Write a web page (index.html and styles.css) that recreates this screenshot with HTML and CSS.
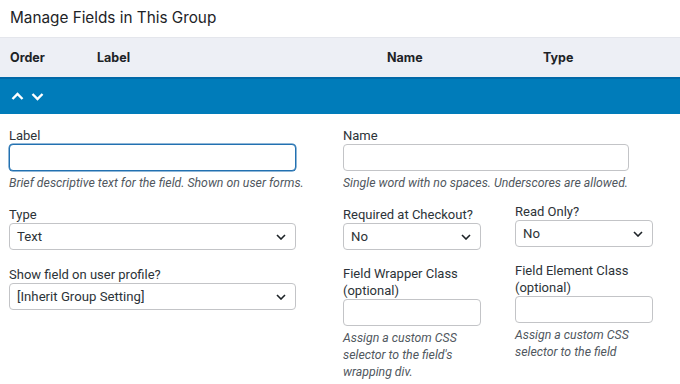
FILE: index.html
```html
<!DOCTYPE html>
<html>
<head>
<meta charset="utf-8">
<link rel="stylesheet" href="styles.css">
</head>
<body>
<div class="panel">
  <h2 class="title">Manage Fields in This Group</h2>
  <div class="thead">
    <span class="th th-order">Order</span>
    <span class="th th-label">Label</span>
    <span class="th th-name">Name</span>
    <span class="th th-type">Type</span>
  </div>
  <div class="rowbar">
    <svg class="arrow" width="13" height="9" viewBox="0 0 13 9"><path d="M1.5 7 L6.5 2 L11.5 7" fill="none" stroke="#fff" stroke-width="2.4"/></svg>
    <svg class="arrow" width="13" height="9" viewBox="0 0 13 9"><path d="M1.5 2 L6.5 7 L11.5 2" fill="none" stroke="#fff" stroke-width="2.4"/></svg>
  </div>
  <div class="form">
    <div class="col-left">
      <div class="field f-label">
        <label class="lbl">Label</label>
        <div class="input focus"></div>
        <p class="help nowrap">Brief descriptive text for the field. Shown on user forms.</p>
      </div>
      <div class="field f-type">
        <label class="lbl">Type</label>
        <div class="select"><span>Text</span><svg class="chev" width="10" height="6" viewBox="0 0 10 6"><path d="M1 1 L5 5 L9 1" fill="none" stroke="#1d2327" stroke-width="1.6"/></svg></div>
      </div>
      <div class="field f-show">
        <label class="lbl">Show field on user profile?</label>
        <div class="select"><span>[Inherit Group Setting]</span><svg class="chev" width="10" height="6" viewBox="0 0 10 6"><path d="M1 1 L5 5 L9 1" fill="none" stroke="#1d2327" stroke-width="1.6"/></svg></div>
      </div>
    </div>
    <div class="col-right">
      <div class="field f-name">
        <label class="lbl">Name</label>
        <div class="input"></div>
        <p class="help nowrap">Single word with no spaces. Underscores are allowed.</p>
      </div>
      <div class="pair pair-1">
        <div class="field sub">
          <label class="lbl">Required at Checkout?</label>
          <div class="select"><span>No</span><svg class="chev" width="10" height="6" viewBox="0 0 10 6"><path d="M1 1 L5 5 L9 1" fill="none" stroke="#1d2327" stroke-width="1.6"/></svg></div>
        </div>
        <div class="field sub raised">
          <label class="lbl">Read Only?</label>
          <div class="select"><span>No</span><svg class="chev" width="10" height="6" viewBox="0 0 10 6"><path d="M1 1 L5 5 L9 1" fill="none" stroke="#1d2327" stroke-width="1.6"/></svg></div>
        </div>
      </div>
      <div class="pair pair-2">
        <div class="field sub">
          <label class="lbl">Field Wrapper Class<br>(optional)</label>
          <div class="input"></div>
          <p class="help">Assign a custom CSS selector to the field's wrapping div.</p>
        </div>
        <div class="field sub raised">
          <label class="lbl">Field Element Class<br>(optional)</label>
          <div class="input"></div>
          <p class="help">Assign a custom CSS selector to the field</p>
        </div>
      </div>
    </div>
  </div>
</div>
</body>
</html>
```
FILE: styles.css
```css
* { box-sizing: border-box; }
html, body { margin: 0; padding: 0; background: #fff; }
body {
  font-family: Roboto, "Noto Sans", "Liberation Sans", sans-serif;
  color: #1d2327;
  width: 680px;
  height: 384px;
  overflow: hidden;
}
.title {
  margin: 0;
  height: 37px;
  padding: 8px 0 0 10px;
  font-family: Inter, Roboto, sans-serif;
  font-size: 15.3px;
  font-weight: 400;
  line-height: 20px;
  color: #1d2327;
}
.thead {
  position: relative;
  height: 40px;
  background: #edeff5;
  border-top: 1px solid #e4e6ec;
  display: flex;
  align-items: center;
  font-family: Inter, Roboto, sans-serif;
  font-size: 12.5px;
  font-weight: 700;
  color: #1d2327;
}
.th { position: absolute; }
.th-order { left: 10px; }
.th-label { left: 97px; }
.th-name { left: 387px; }
.th-type { left: 543px; }
.rowbar {
  height: 37px;
  background: #007cba;
  border-top: 2px solid #0069a8;
  display: flex;
  align-items: center;
  gap: 7px;
  padding-left: 11px;
  padding-bottom: 1px;
}
.arrow { display: block; }
.form {
  display: flex;
  padding: 13px 0 0 9px;
}
.col-left { width: 287px; }
.col-right { margin-left: 47px; width: 311px; }
.field { display: flex; flex-direction: column; }
.lbl {
  font-size: 13px;
  line-height: 17px;
  color: #2c3338;
}
.input {
  height: 27px;
  border: 1px solid #c3c4c7;
  border-radius: 4px;
  background: #fff;
}
.input.focus {
  border-color: #2271b1;
  box-shadow: 0 0 0 0.5px #2271b1;
}
.help {
  margin: 4px 0 0;
  font-size: 12.3px;
  line-height: 17px;
  font-style: italic;
  color: #50575e;
}
.nowrap { white-space: nowrap; }
.select {
  height: 27px;
  border: 1px solid #c3c4c7;
  border-radius: 4px;
  display: flex;
  align-items: center;
  justify-content: space-between;
  padding: 0 9px 0 7px;
  font-size: 13.2px;
  color: #2c3338;
}
.chev { display: block; }
.f-name { width: 286px; }
.f-type { margin-top: 14px; }
.f-show { margin-top: 16px; }
.pair { display: flex; gap: 34px; align-items: flex-start; }
.pair .sub { width: 138px; }
.pair .raised { margin-top: -3px; }
.pair-1 { margin-top: 14px; }
.pair-2 { margin-top: 15px; }
```
